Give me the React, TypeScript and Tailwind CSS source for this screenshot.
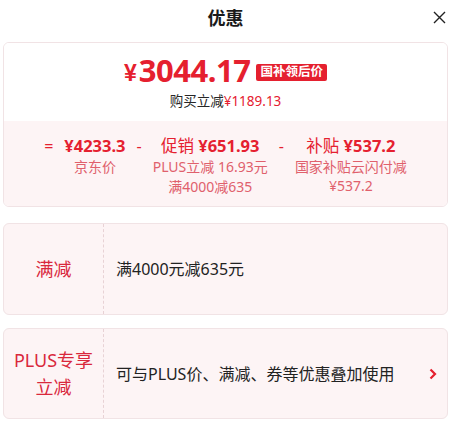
import React from 'react';

const font = { fontFamily: '"Noto Sans", "Noto Sans CJK SC", sans-serif' };

export default function App() {
  return (
    <div className="w-[451px] h-[435px] bg-white overflow-hidden" style={font}>
      {/* header */}
      <div className="relative h-[36px] flex items-center justify-center">
        <span className="text-[18px] font-bold text-[#1a1a1a]">优惠</span>
        <svg className="absolute right-[5px] top-[11px]" width="13" height="13" viewBox="0 0 13 13">
          <path d="M1 1 L12 12 M12 1 L1 12" stroke="#222" strokeWidth="1.4" />
        </svg>
      </div>

      <div className="px-[3px] pt-[6px] flex flex-col">
        {/* price card */}
        <div className="rounded-[6px] border border-[#f1e3e5] overflow-hidden">
          <div className="bg-white h-[78px] flex flex-col items-center pt-[12px]">
            <div className="flex items-center">
              <span className="text-[#e5202f] font-extrabold text-[23px] leading-none mt-[5px] mr-[2px]" style={{ fontFamily: '"Liberation Sans", sans-serif' }}>¥</span>
              <span className="text-[#e5202f] font-bold text-[31px] leading-none tracking-[-0.5px]">3044.17</span>
              <span className="ml-[6px] mt-[3px] bg-[#e5202f] text-white text-[12.5px] font-bold rounded-[2px] px-[4px] h-[17px] flex items-center">
                国补领后价
              </span>
            </div>
            <div className="mt-[9px] text-[13.5px] text-[#262626] leading-none">
              购买立减<span className="text-[#e5202f]">¥1189.13</span>
            </div>
          </div>
          <div className="bg-[#fdf4f5] h-[85px] pt-[14px] flex justify-center items-start gap-[11px]">
            <span className="text-[#e5202f] text-[16px] leading-[22px]">=</span>
            <div className="flex flex-col items-center">
              <span className="text-[#e5202f] text-[16.5px] leading-[22px] font-bold">¥4233.3</span>
              <span className="text-[#e0606c] text-[14px] leading-[20px]">京东价</span>
            </div>
            <span className="text-[#e5202f] text-[16px] leading-[22px]">-</span>
            <div className="flex flex-col items-center">
              <span className="text-[#e5202f] text-[16.5px] leading-[22px]">
                促销 <span className="font-bold">¥651.93</span>
              </span>
              <span className="text-[#e0606c] text-[14px] leading-[20px]">PLUS立减 16.93元</span>
              <span className="text-[#e0606c] text-[14px] leading-[20px]">满4000减635</span>
            </div>
            <span className="text-[#e5202f] text-[16px] leading-[22px]">-</span>
            <div className="flex flex-col items-center">
              <span className="text-[#e5202f] text-[16.5px] leading-[22px]">
                补贴 <span className="font-bold">¥537.2</span>
              </span>
              <span className="text-[#e0606c] text-[14px] leading-[20px]">国家补贴云闪付减</span>
              <span className="text-[#e0606c] text-[14px] leading-[18px]">¥537.2</span>
            </div>
          </div>
        </div>

        {/* 满减 */}
        <div className="mt-[16px] h-[92px] rounded-[6px] border border-[#f1e3e5] bg-[#fdf4f5] flex">
          <div className="w-[100px] flex items-center justify-center border-r border-dashed border-[#e8d2d5]">
            <span className="text-[#d9283c] text-[18px]">满减</span>
          </div>
          <div className="flex-1 flex items-center pl-[12px]">
            <span className="text-[#222] text-[16px]">满4000元减635元</span>
          </div>
        </div>

        {/* PLUS */}
        <div className="mt-[13px] h-[91px] rounded-[6px] border border-[#f1e3e5] bg-[#fdf4f5] flex">
          <div className="w-[100px] flex flex-col items-center justify-center border-r border-dashed border-[#e8d2d5]">
            <span className="text-[#d9283c] text-[18px] leading-[27px]">PLUS专享</span>
            <span className="text-[#d9283c] text-[18px] leading-[27px]">立减</span>
          </div>
          <div className="flex-1 flex items-center pl-[12px] pr-[10px]">
            <span className="text-[#222] text-[16px] flex-1">可与PLUS价、满减、券等优惠叠加使用</span>
            <svg width="8" height="12" viewBox="0 0 8 12">
              <path d="M1.5 1.5 L6 6 L1.5 10.5" stroke="#e5202f" strokeWidth="2.2" fill="none" />
            </svg>
          </div>
        </div>
      </div>
    </div>
  );
}
